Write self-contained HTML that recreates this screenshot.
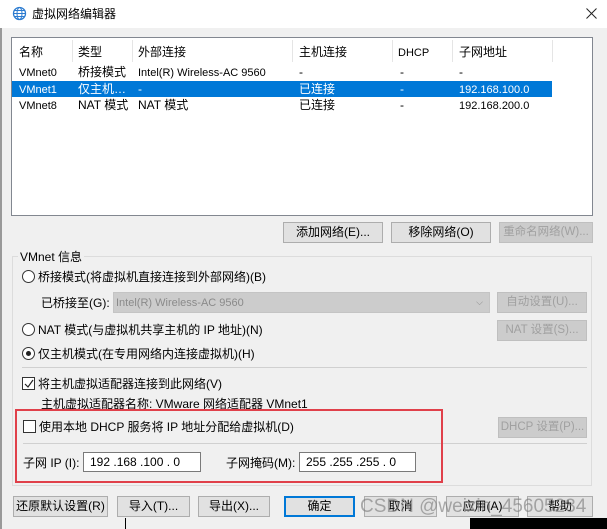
<!DOCTYPE html><html><head><meta charset="utf-8"><style>
*{box-sizing:border-box;margin:0;padding:0}
body{width:607px;height:529px;overflow:hidden;background:#f0f0f0;font-family:"Liberation Sans","Noto Sans CJK SC",sans-serif;font-size:12px;color:#000;position:relative}
.a{position:absolute;white-space:nowrap;line-height:14px}
.btn{position:absolute;border:1px solid #adadad;background:#e1e1e1;text-align:center;line-height:19px;height:21px;white-space:nowrap;overflow:hidden;font-size:12px}
.dis{color:#a0a0a0;background:#cccccc;border-color:#bfbfbf;font-size:11.5px}
.inp{position:absolute;background:#fff;border:1px solid #7a7a7a;height:20px;line-height:18px;padding-left:6px}
.rad{position:absolute;width:13px;height:13px;border:1px solid #333;border-radius:50%;background:#fff}
.chk{position:absolute;width:13px;height:13px;border:1px solid #333;background:#fff}
</style></head><body>
<div class="a" style="left:0;top:0;width:607px;height:28px;background:#fff"></div>
<svg class="a" style="left:12px;top:6px" width="15" height="15" viewBox="0 0 15 15"><circle cx="7.5" cy="7.5" r="6" fill="none" stroke="#2b7bd0" stroke-width="1.3"/><ellipse cx="7.5" cy="7.5" rx="2.5" ry="6" fill="none" stroke="#2b7bd0"/><path d="M1.5 7.5h12M2.5 4.5h10M2.5 10.5h10" stroke="#2b7bd0"/></svg>
<div class="a" style="left:32px;top:7px;font-size:12px">虚拟网络编辑器</div>
<svg class="a" style="left:288px;top:0" width="1" height="1"></svg>
<svg class="a" style="left:586px;top:8px" width="11" height="11" viewBox="0 0 11 11"><path d="M0.5 0.5L10.5 10.5M10.5 0.5L0.5 10.5" stroke="#222" stroke-width="1"/></svg>
<div class="a" style="left:0;top:28px;width:2px;height:501px;background:#999"></div>
<!-- table -->
<div class="a" style="left:11px;top:37px;width:582px;height:179px;background:#fff;border:1px solid #828790"></div>
<div class="a" style="left:72px;top:40px;width:1px;height:22px;background:#e5e5e5"></div>
<div class="a" style="left:132px;top:40px;width:1px;height:22px;background:#e5e5e5"></div>
<div class="a" style="left:292px;top:40px;width:1px;height:22px;background:#e5e5e5"></div>
<div class="a" style="left:392px;top:40px;width:1px;height:22px;background:#e5e5e5"></div>
<div class="a" style="left:452px;top:40px;width:1px;height:22px;background:#e5e5e5"></div>
<div class="a" style="left:552px;top:40px;width:1px;height:22px;background:#e5e5e5"></div>
<div class="a" style="left:19px;top:45px">名称</div><div class="a" style="left:78px;top:45px">类型</div><div class="a" style="left:138px;top:45px">外部连接</div><div class="a" style="left:299px;top:45px">主机连接</div><div class="a" style="left:398px;top:46px;font-size:11px">DHCP</div><div class="a" style="left:459px;top:45px">子网地址</div>
<div class="a" style="left:12px;top:81px;width:540px;height:16px;background:#0078d7"></div>
<div class="a" style="left:19px;top:66px;font-size:11px">VMnet0</div><div class="a" style="left:78px;top:65px">桥接模式</div><div class="a" style="left:138px;top:66px;font-size:11px">Intel(R) Wireless-AC 9560</div><div class="a" style="left:299px;top:65px">-</div><div class="a" style="left:400px;top:65px">-</div><div class="a" style="left:459px;top:65px">-</div>
<div style="color:#fff"><div class="a" style="left:19px;top:83px;font-size:11px">VMnet1</div><div class="a" style="left:78px;top:82px">仅主机…</div><div class="a" style="left:138px;top:82px">-</div><div class="a" style="left:299px;top:82px">已连接</div><div class="a" style="left:400px;top:82px">-</div><div class="a" style="left:459px;top:83px;font-size:11px">192.168.100.0</div></div>
<div class="a" style="left:19px;top:99px;font-size:11px">VMnet8</div><div class="a" style="left:78px;top:98px">NAT 模式</div><div class="a" style="left:138px;top:98px">NAT 模式</div><div class="a" style="left:299px;top:98px">已连接</div><div class="a" style="left:400px;top:98px">-</div><div class="a" style="left:459px;top:99px;font-size:11px">192.168.200.0</div>
<div class="btn" style="left:283px;top:222px;width:100px">添加网络(E)...</div>
<div class="btn" style="left:391px;top:222px;width:100px">移除网络(O)</div>
<div class="btn dis" style="left:499px;top:222px;width:94px">重命名网络(W)...</div>
<!-- group -->
<div class="a" style="left:12px;top:256px;width:580px;height:230px;border:1px solid #dcdcdc"></div>
<div class="a" style="left:18px;top:250px;background:#f0f0f0;padding:0 2px">VMnet 信息</div>
<div class="rad" style="left:22px;top:270px"></div><div class="a" style="left:38px;top:270px">桥接模式(将虚拟机直接连接到外部网络)(B)</div>
<div class="a" style="left:41px;top:296px">已桥接至(G):</div>
<div class="a" style="left:113px;top:292px;width:377px;height:21px;background:#ccc;border:1px solid #c4c4c4;color:#8a8a8a;padding:3px 0 0 2px;font-size:11px">Intel(R) Wireless-AC 9560<span style="position:absolute;right:6px;top:2px;font-size:9px">⌵</span></div>
<div class="btn dis" style="left:497px;top:292px;width:90px">自动设置(U)...</div>
<div class="rad" style="left:22px;top:323px"></div><div class="a" style="left:38px;top:323px">NAT 模式(与虚拟机共享主机的 IP 地址)(N)</div>
<div class="btn dis" style="left:497px;top:320px;width:90px">NAT 设置(S)...</div>
<div class="rad" style="left:22px;top:347px"></div><div class="a" style="left:26px;top:351px;width:5px;height:5px;border-radius:50%;background:#222"></div><div class="a" style="left:38px;top:347px">仅主机模式(在专用网络内连接虚拟机)(H)</div>
<div class="a" style="left:22px;top:367px;width:565px;height:1px;background:#d0d0d0"></div>
<div class="chk" style="left:22px;top:377px"></div><svg class="a" style="left:24px;top:379px" width="10" height="10" viewBox="0 0 10 10"><path d="M1 5L4 8L9 1" fill="none" stroke="#222" stroke-width="1.2"/></svg><div class="a" style="left:38px;top:377px">将主机虚拟适配器连接到此网络(V)</div>
<div class="a" style="left:41px;top:397px">主机虚拟适配器名称: VMware 网络适配器 VMnet1</div>
<div class="chk" style="left:23px;top:420px"></div><div class="a" style="left:39px;top:420px">使用本地 DHCP 服务将 IP 地址分配给虚拟机(D)</div>
<div class="btn dis" style="left:498px;top:417px;width:89px">DHCP 设置(P)...</div>
<div class="a" style="left:23px;top:443px;width:564px;height:1px;background:#d0d0d0"></div>
<div class="a" style="left:23px;top:456px">子网 IP (I):</div>
<div class="inp" style="left:83px;top:452px;width:118px">192 .168 .100 . 0</div>
<div class="a" style="left:226px;top:456px">子网掩码(M):</div>
<div class="inp" style="left:299px;top:452px;width:117px">255 .255 .255 . 0</div>
<div class="a" style="left:15px;top:409px;width:428px;height:74px;border:2px solid #e0404a"></div>
<!-- bottom -->
<div class="btn" style="left:13px;top:496px;width:95px">还原默认设置(R)</div>
<div class="btn" style="left:117px;top:496px;width:73px">导入(T)...</div>
<div class="btn" style="left:198px;top:496px;width:72px">导出(X)...</div>
<div class="btn" style="left:284px;top:496px;width:71px;border:2px solid #0078d7;line-height:17px">确定</div>
<div class="btn" style="left:364px;top:496px;width:73px">取消</div>
<div class="btn" style="left:446px;top:496px;width:73px">应用(A)</div>
<div class="btn" style="left:527px;top:496px;width:66px">帮助</div>
<div class="a" style="left:360px;top:497px;font-size:19px;line-height:20px;color:rgba(120,120,120,0.6)">CSDN @weixin_45605234</div>
<div class="a" style="left:125px;top:518px;width:1px;height:11px;background:#000"></div>
<div class="a" style="left:470px;top:518px;width:137px;height:11px;background:#000"></div>
</body></html>
